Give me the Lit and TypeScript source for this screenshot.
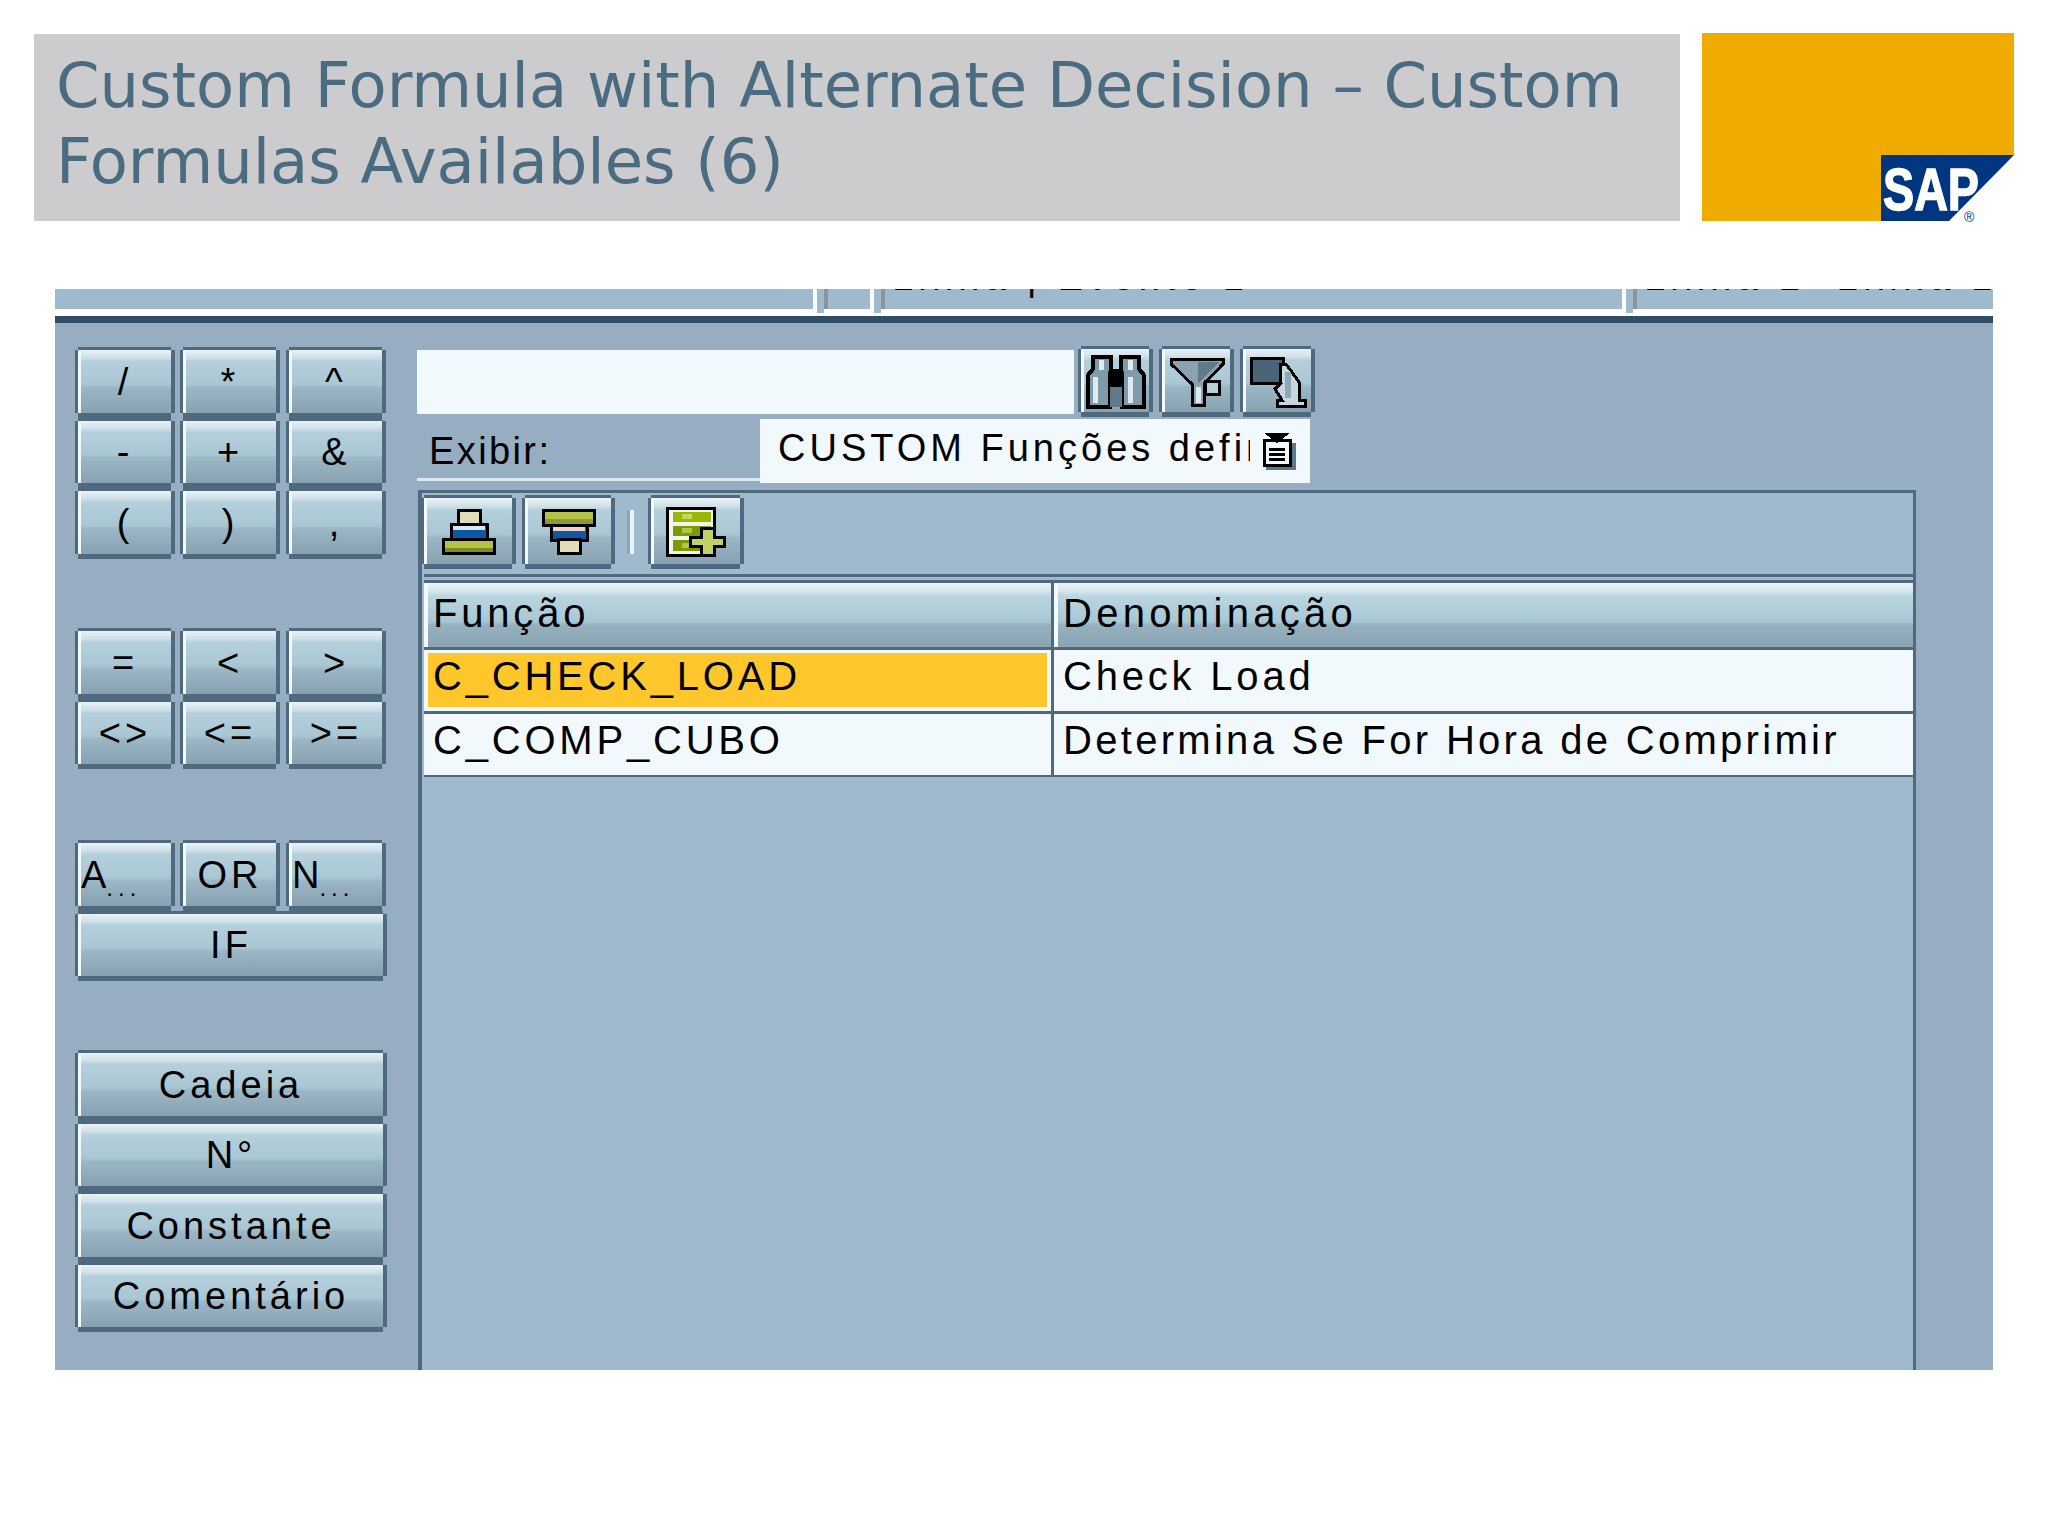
import {LitElement, css, html, svg} from "lit";
import {customElement} from "lit/decorators.js";

const DARK = css`#4f6a7e`;

// sap gui button look: notched dark frame, white left edge, banded face
const guiButton = css`
  .btn {
    box-sizing: border-box;
    display: flex;
    align-items: center;
    justify-content: center;
    color: #000;
    font-family: "Liberation Sans", Arial, sans-serif;
    font-size: 38px;
    letter-spacing: 4px;
    white-space: nowrap;
    overflow: hidden;
    background:
      linear-gradient(${DARK}, ${DARK}) 3px 0 / calc(100% - 7px) 3px no-repeat,
      linear-gradient(${DARK}, ${DARK}) 3px 100% / calc(100% - 7px) 5px no-repeat,
      linear-gradient(${DARK}, ${DARK}) 0 3px / 3px calc(100% - 8px) no-repeat,
      linear-gradient(${DARK}, ${DARK}) 100% 3px / 4px calc(100% - 8px) no-repeat,
      linear-gradient(#f4fafc, #f4fafc) 3px 3px / 3px calc(100% - 8px) no-repeat,
      linear-gradient(#e9f2f6 0, #cfe1e9 12%, #b4d0dc 18%, #a9c6d3 55%, #9bb6c5 60%, #8fa9b9 85%, #87a1b1 100%) 3px 3px / calc(100% - 7px) calc(100% - 8px) no-repeat;
  }
`;

@customElement("app-root")
export class AppRoot extends LitElement {
  static styles = [guiButton, css`
    :host {
      display: block;
      width: 2048px;
      height: 1536px;
      background: #fff;
      overflow: hidden;
    }
    .head {
      display: flex;
      gap: 22px;
      padding: 33px 0 0 34px;
    }
    .title {
      box-sizing: border-box;
      width: 1646px;
      height: 187px;
      margin-top: 1px;
      padding: 14px 0 0 22px;
      background: #cccbcd;
      color: #4a6b80;
      font-family: "DejaVu Sans", sans-serif;
      font-size: 62.4px;
      line-height: 76px;
    }
    .logo {
      display: block;
      width: 312px;
      height: 188px;
      overflow: visible;
    }
    .screen {
      width: 1938px;
      margin: 68px 0 0 55px;
    }
    .tabs {
      display: flex;
      height: 27px;
      overflow: hidden;
    }
    .tab {
      box-sizing: border-box;
      position: relative;
      height: 20px;
      background: #9fbacc;
      overflow: hidden;
      flex: none;
    }
    .tab span {
      position: absolute;
      bottom: 13px;
      left: 7px;
      font: 38px/38px "Liberation Sans", Arial, sans-serif;
      letter-spacing: 5.2px;
      white-space: nowrap;
      color: #000;
    }
    .mark {
      flex: none;
      display: flex;
      width: 11px;
      margin-left: 4px;
      height: 24px;
    }
    .mark i {
      display: block;
      width: 7px;
      height: 24px;
      background: #9fbacc;
    }
    .mark b {
      display: block;
      width: 4px;
      height: 20px;
      background: #8a949c;
    }
    .main {
      display: flex;
      height: 1054px;
      background: #97aec2;
      border-top: 7px solid #2f4d63;
      box-sizing: border-box;
    }
    .keys {
      flex: none;
      box-sizing: border-box;
      width: 364px;
      padding: 24px 0 0 20px;
      display: flex;
      flex-direction: column;
    }
    .group {
      display: grid;
      grid-template-columns: 105px 106px 101px;
      grid-auto-rows: 70.5px;
      width: 312px;
    }
    .group.g2 { margin-top: 69.5px; }
    .group.g3 { margin-top: 71px; }
    .group.g4 { margin-top: 69px; }
    .wide { grid-column: 1 / 4; }
    .key { width: 100px; }
    .group .wide { width: 312px; }
    .tiny {
      align-self: flex-end;
      margin-bottom: 9px;
      font-size: 24px;
      letter-spacing: 5px;
    }
    .key.short {
      justify-content: flex-start;
      padding-left: 6px;
      letter-spacing: 0;
    }
    .right {
      flex: 1;
      min-width: 0;
    }
    .search {
      display: flex;
      align-items: center;
      margin: 23px 0 0 -2px;
      height: 71px;
    }
    .input {
      width: 657px;
      height: 64px;
      background: #f2f9fd;
      margin-right: 4px;
    }
    .ic {
      height: 71px;
      width: 75px;
      margin-right: 6px;
    }
    .ic svg, .tool svg, .drop svg { display: block; flex: none; }
    .filter {
      display: flex;
      margin: 2px 0 0 -2px;
      height: 64px;
    }
    .label {
      box-sizing: border-box;
      width: 343px;
      height: 62px;
      padding: 10px 0 0 12px;
      border-bottom: 3px solid #dcebf3;
      font: 38px/44px "Liberation Sans", Arial, sans-serif;
      letter-spacing: 2.4px;
      color: #000;
    }
    .drop {
      position: relative;
      box-sizing: border-box;
      width: 550px;
      height: 64px;
      padding: 7px 0 0 18px;
      background: #f2f9fd;
      font: 38px/44px "Liberation Sans", Arial, sans-serif;
      letter-spacing: 4px;
      color: #000;
      white-space: nowrap;
      overflow: hidden;
    }
    .drop .val {
      display: block;
      width: 472px;
      overflow: hidden;
    }
    .drop svg {
      position: absolute;
      left: 502px;
      top: 14px;
    }
    .panel {
      box-sizing: border-box;
      width: 1498px;
      height: 880px;
      margin: 7px 0 0 -1px;
      padding-left: 2px;
      background: #9fbacc;
      border-top: 3px solid ${DARK};
      border-left: 4px solid ${DARK};
      border-right: 3px solid ${DARK};
    }
    .bar {
      display: flex;
      align-items: center;
      box-sizing: border-box;
      height: 81px;
      margin-left: -3px;
      padding: 1px 0 4px 0;
    }
    .tool {
      height: 74px;
      width: 93px;
      margin-right: 8px;
    }
    .tool.first { width: 95px; margin-right: 6px; }
    .tool.add { width: 96px; margin-right: 0; }
    .sep {
      width: 4px;
      height: 44px;
      margin: 0 14px 0 7px;
      background: #e9f4f9;
      box-shadow: -3px 0 0 #8ba6b8;
    }
    .rule {
      height: 3px;
      background: ${DARK};
      margin-bottom: 3px;
    }
    .rule.last { margin-bottom: 0; }
    .table {
      display: grid;
      grid-template-columns: 627px 1fr;
      column-gap: 3px;
      grid-auto-rows: 67px 64px 63px;
      background: ${DARK};
    }
    .th, .td {
      box-sizing: border-box;
      font: 40px/44px "Liberation Sans", Arial, sans-serif;
      letter-spacing: 3.8px;
      color: #000;
      white-space: nowrap;
      display: flex;
      align-items: center;
      padding-left: 9px;
    }
    .tight { letter-spacing: 3.3px; }
    .loose { letter-spacing: 4.3px; }
    .th {
      height: 64px;
      padding-bottom: 4px;
      background:
        linear-gradient(#f4fafc, #f4fafc) 0 0 / 4px 100% no-repeat,
        linear-gradient(#eaf3f7 0, #d3e4ec 14%, #b9d6e1 20%, #a9c7d4 60%, #95b0be 66%, #8aa4b3 100%);
    }
    .td {
      height: 61px;
      background: #f2f9fd;
      padding-bottom: 9px;
    }
    .td.on {
      background: linear-gradient(#ffc72c, #ffc72c) 4px 3px / calc(100% - 8px) 54px no-repeat, #f2f9fd;
    }
  `];

  iconBinoculars() {
    return html`<svg width="60" height="54" viewBox="0 0 60 54" shape-rendering="crispEdges">
      ${svg`<path d="M7 2H25V16H35V2H53V14L58 20V52H36V30H24V52H2V20L7 14Z" fill="#7f9aa8" stroke="#000" stroke-width="4"/>
      <rect x="13" y="5" width="5" height="10" fill="#e0eaef"/>
      <rect x="42" y="5" width="5" height="10" fill="#e0eaef"/>
      <rect x="7" y="22" width="5" height="26" fill="#dfe9ee"/>
      <rect x="42" y="22" width="5" height="26" fill="#dfe9ee"/>
      <rect x="22" y="16" width="16" height="13" fill="#000"/>
      <rect x="24" y="32" width="12" height="20" fill="#5f7a8a"/>`}
    </svg>`;
  }

  iconFunnel() {
    return html`<svg width="56" height="50" viewBox="0 0 56 50" shape-rendering="crispEdges">
      ${svg`<path d="M2 2H54V7L35 27V48H23V27L2 7Z" fill="#8ba3b0" stroke="#000" stroke-width="3"/>
      <path d="M29 5H50L29 26Z" fill="#5f7a8a"/>
      <rect x="27" y="30" width="5" height="16" fill="#dfe9ee"/>
      <rect x="36" y="24" width="14" height="13" fill="#b9cfd9" stroke="#000" stroke-width="3"/>`}
    </svg>`;
  }

  iconHand() {
    return html`<svg width="58" height="52" viewBox="0 0 58 52" shape-rendering="crispEdges">
      ${svg`<rect x="2" y="2" width="32" height="25" fill="#4a6478" stroke="#000" stroke-width="3"/>
      <path d="M31 8H37L50 26V44H56V50H28V44H33L26 33L32 27Z" fill="#c6d7e2" stroke="#000" stroke-width="3"/>
      <rect x="36" y="16" width="6" height="26" fill="#8ea8b6"/>`}
    </svg>`;
  }

  iconSortUp() {
    return html`<svg width="54" height="46" viewBox="0 0 54 46" shape-rendering="crispEdges">
      ${svg`<rect x="16" y="1.5" width="22" height="14" fill="#dfdcb6" stroke="#000" stroke-width="3"/>
      <rect x="9" y="15" width="36" height="16" fill="#0b58a6" stroke="#000" stroke-width="3"/>
      <rect x="11" y="17" width="32" height="4" fill="#d7e7f3"/>
      <rect x="1.5" y="30" width="51" height="14.5" fill="#b4c24a" stroke="#000" stroke-width="3"/>
      <rect x="3" y="39" width="48" height="4" fill="#7e8c22"/>`}
    </svg>`;
  }

  iconSortDown() {
    return html`<svg width="54" height="46" viewBox="0 0 54 46" shape-rendering="crispEdges">
      ${svg`<rect x="1.5" y="1.5" width="51" height="15" fill="#b4c24a" stroke="#000" stroke-width="3"/>
      <rect x="3" y="10" width="48" height="5" fill="#8e9c2c"/>
      <rect x="9" y="16" width="36" height="15" fill="#0b58a6" stroke="#000" stroke-width="3"/>
      <rect x="11" y="18" width="32" height="4" fill="#f1d3cc"/>
      <rect x="16" y="30" width="22" height="14.5" fill="#dfdcb6" stroke="#000" stroke-width="3"/>`}
    </svg>`;
  }

  iconAddRow() {
    return html`<svg width="60" height="50" viewBox="0 0 60 50" shape-rendering="crispEdges">
      ${svg`<rect x="1.5" y="1.5" width="47" height="47" fill="#f2f6f0" stroke="#000" stroke-width="3"/>
      <rect x="7" y="5" width="38" height="10" fill="#9ab800"/>
      <rect x="7" y="19" width="38" height="10" fill="#7d9a00"/>
      <rect x="7" y="33" width="30" height="11" fill="#7d9a00"/>
      <rect x="16" y="7" width="10" height="5" fill="#c4d65c"/>
      <rect x="16" y="21" width="10" height="5" fill="#b4c64a"/>
      <rect x="16" y="36" width="10" height="5" fill="#b4c64a"/>
      <path d="M35 21H48V30H58V39H48V48H35V39H24V30H35Z" fill="#c2d06a" stroke="#000" stroke-width="3"/>`}
    </svg>`;
  }

  iconDrop() {
    return html`<svg width="34" height="37" viewBox="0 0 34 37" shape-rendering="crispEdges">
      ${svg`<rect x="4" y="10" width="30" height="27" fill="#5d7688"/>
      <rect x="2" y="7" width="26" height="25" fill="#f2f9fd" stroke="#000" stroke-width="3"/>
      <path d="M2 0H28L15 10Z" fill="#000"/>
      <rect x="7" y="15" width="16" height="3" fill="#000"/>
      <rect x="7" y="20" width="16" height="3" fill="#000"/>
      <rect x="7" y="25" width="16" height="3" fill="#000"/>`}
    </svg>`;
  }

  renderKeys() {
    const ops = ["/", "*", "^", "-", "+", "&", "(", ")", ","];
    const cmp = ["=", "<", ">", "<>", "<=", ">="];
    const words = ["Cadeia", "N°", "Constante", "Comentário"];
    return html`
      <div class="keys">
        <div class="group">
          ${ops.map((k) => html`<div class="btn key">${k}</div>`)}
        </div>
        <div class="group g2">
          ${cmp.map((k) => html`<div class="btn key">${k}</div>`)}
        </div>
        <div class="group g3">
          <div class="btn key short">A<span class="tiny">...</span></div>
          <div class="btn key">OR</div>
          <div class="btn key short">N<span class="tiny">...</span></div>
          <div class="btn wide">IF</div>
        </div>
        <div class="group g4">
          ${words.map((k) => html`<div class="btn wide">${k}</div>`)}
        </div>
      </div>
    `;
  }

  render() {
    return html`
      <div class="head">
        <div class="title">Custom Formula with Alternate Decision – Custom<br />Formulas Availables (6)</div>
        <svg class="logo" viewBox="0 0 312 188">
          <path d="M0 0H312V122H179V188H0Z" fill="#f0ab00" />
          <path d="M179 122H312L247 188H179Z" fill="#003580" />
          <text x="181" y="177" fill="#fff" stroke="#fff" stroke-width="1.5" font-family="Liberation Sans" font-weight="700" font-size="60" textLength="96" lengthAdjust="spacingAndGlyphs">SAP</text>
          <text x="262" y="189" fill="#003580" font-family="Liberation Sans" font-size="14">®</text>
        </svg>
      </div>
      <div class="screen">
        <div class="tabs">
          <div class="tab" style="width:758px"></div>
          <div class="mark"><i></i><b></b></div>
          <div class="tab" style="width:42px"></div>
          <div class="mark"><i></i><b></b></div>
          <div class="tab" style="width:737px"><span>Linha | Evento 1</span></div>
          <div class="mark"><i></i><b></b></div>
          <div class="tab" style="width:357px"><span>Linha 1&nbsp;&nbsp;Linha 1</span></div>
        </div>
        <div class="main">
          ${this.renderKeys()}
          <div class="right">
            <div class="search">
              <div class="input"></div>
              <div class="btn ic">${this.iconBinoculars()}</div>
              <div class="btn ic">${this.iconFunnel()}</div>
              <div class="btn ic">${this.iconHand()}</div>
            </div>
            <div class="filter">
              <div class="label">Exibir:</div>
              <div class="drop">
                <span class="val">CUSTOM Funções definidas</span>
                ${this.iconDrop()}
              </div>
            </div>
            <div class="panel">
              <div class="bar">
                <div class="btn tool first">${this.iconSortUp()}</div>
                <div class="btn tool">${this.iconSortDown()}</div>
                <div class="sep"></div>
                <div class="btn tool add">${this.iconAddRow()}</div>
              </div>
              <div class="rule"></div>
              <div class="rule last"></div>
              <div class="table">
                <div class="th">Função</div>
                <div class="th loose">Denominação</div>
                <div class="td on">C_CHECK_LOAD</div>
                <div class="td">Check Load</div>
                <div class="td">C_COMP_CUBO</div>
                <div class="td tight">Determina Se For Hora de Comprimir</div>
              </div>
            </div>
          </div>
        </div>
      </div>
    `;
  }
}
